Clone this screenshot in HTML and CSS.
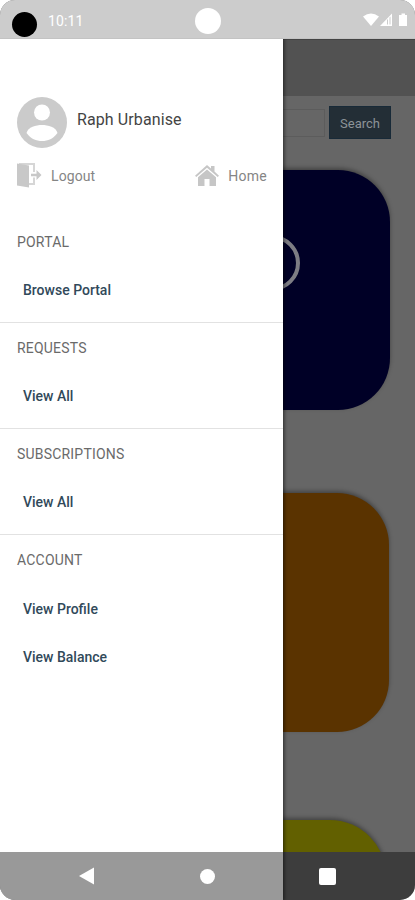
FILE: index.html
```html
<!DOCTYPE html>
<html lang="en">
<head>
<meta charset="utf-8">
<title>Portal menu</title>
<link rel="stylesheet" href="styles.css">
</head>
<body>
<div class="phone">
  <header class="status">
    <span class="dot"></span>
    <span class="clock">10:11</span>
    <span class="camera"></span>
    <svg class="signals" width="44" height="16" viewBox="0 0 44 16" fill="#fff">
      <path d="M0 4.500Q8 -1.500 16 4.500L8 14Z"/>
      <path fill-rule="evenodd" d="M17 14L29 1.500V14ZM24 8V12.500H25V7ZM26.500 5.500V12.500H27.500V4.500Z"/>
      <path d="M38.500 1.500H42V3H44V14H36V3H38.500Z"/>
    </svg>
  </header>
  <main class="app">
    <div class="toolbar"></div>
    <div class="search">
      <div class="field"></div>
      <button class="submit">Search</button>
    </div>
    <div class="cards">
      <div class="card navy"><span class="ring"></span></div>
      <div class="card orange"></div>
      <div class="card yellow"></div>
    </div>
  </main>
  <aside class="drawer">
    <div class="profile">
      <svg width="50" height="51" viewBox="0 0 50 51">
        <ellipse cx="25" cy="25.500" rx="25" ry="25.500" fill="#cbcbcb"/>
        <circle cx="25" cy="15.500" r="8" fill="#fff"/>
        <path d="M9.500 36C11 30 19 28 25 28S39 30 40.500 36C36 42 31 44 25 44S14 42 9.500 36Z" fill="#fff"/>
      </svg>
      <span class="name">Raph Urbanise</span>
    </div>
    <div class="actions">
      <a class="action">
        <svg width="25" height="25" viewBox="0 0 25 25">
          <path d="M2 1H17V9M17 14.500V21H11" fill="none" stroke="#d6d6d6" stroke-width="2"/>
          <path d="M0 .5L12 2.500V24.500L0 22.500Z" fill="#c8c8c8"/>
          <path d="M14 10.800H19.500V7L24.500 12L19.500 17V13.200H14Z" fill="#c8c8c8"/>
        </svg>
        <span>Logout</span>
      </a>
      <a class="action home">
        <svg width="24" height="21" viewBox="0 0 24 21" fill="#c6c6c6">
          <path d="M12 0L16 3.500V1H19.500V6.500L24 10.700L22.700 12L12 2.800L1.300 12L0 10.700Z"/>
          <path d="M12 4.500L21 12.200V21H14.500V14H9.500V21H3V12.200Z"/>
        </svg>
        <span>Home</span>
      </a>
    </div>
    <nav class="menu">
      <section><h2>PORTAL</h2><a>Browse Portal</a></section>
      <section><h2>REQUESTS</h2><a>View All</a></section>
      <section><h2>SUBSCRIPTIONS</h2><a>View All</a></section>
      <section><h2>ACCOUNT</h2><a>View Profile</a><a>View Balance</a></section>
    </nav>
  </aside>
  <footer class="system">
    <svg width="15" height="18" viewBox="0 0 15 18" fill="#fff"><path d="M0 9L15 .5V17.500Z"/></svg>
    <svg class="circle" width="15" height="15" viewBox="0 0 15 15" fill="#fff"><circle cx="7.500" cy="7.500" r="7.500"/></svg>
    <svg width="17" height="17" viewBox="0 0 17 17" fill="#fff"><rect width="17" height="17" rx="2"/></svg>
  </footer>
</div>
</body>
</html>
```
FILE: styles.css
```css
* { box-sizing: border-box; }
body {
  margin: 0;
  background: #fff;
  font-family: Roboto, "Liberation Sans", sans-serif;
  font-size: 14px;
}
.phone {
  display: grid;
  grid-template-columns: 283px 132px;
  grid-template-rows: 39px 813px 48px;
  width: 415px;
  height: 900px;
  border-radius: 15px;
  overflow: hidden;
  background: #666;
}
.status {
  grid-area: 1 / 1 / 2 / 3;
  z-index: 3;
  display: flex;
  align-items: center;
  padding: 4px 8px 0 12px;
  background: #ccc;
  border-bottom: 1px solid #c3c3c3;
}
.dot { width: 25px; height: 25px; margin-top: 6px; border-radius: 50%; background: #000; }
.clock { width: 60px; margin-left: 11px; color: #fff; font-size: 14px; letter-spacing: .1px; }
.camera { width: 26px; height: 26px; margin-left: 87px; border-radius: 50%; background: #fff; }
.signals { margin: -2px 0 0 auto; }
.app {
  grid-area: 2 / 1 / 3 / 3;
  overflow: hidden;
}
.toolbar { height: 57px; background: #525252; border-top: 1px solid #434343; }
.search { display: flex; align-items: center; gap: 4px; height: 53px; padding: 0 24px; }
.field { flex: 1; height: 28px; border: 1px solid #5c5c5c; }
.submit {
  width: 62px;
  height: 33px;
  padding: 2px 0 0;
  border: 1px solid #182a38;
  background: #232e36;
  color: #8c9398;
  font: 13px Roboto, sans-serif;
}
.cards { padding: 21px 25px 0; }
.card {
  display: flex;
  align-items: flex-start;
  justify-content: center;
  height: 240px;
  margin-bottom: 83px;
  border-radius: 52px;
  box-shadow: 0 -2px 4px rgba(0, 0, 0, .35);
}
.navy { background: #000026; }
.orange { background: #5a3300; margin-right: 1px; height: 239px; margin-bottom: 88px; }
.yellow { background: #626000; margin-right: 4px; border-radius: 56px; }
.ring { width: 56px; height: 56px; margin: 65px 0 0 128px; border: 4px solid #7d7d84; border-radius: 50%; }
.drawer {
  grid-area: 2 / 1 / 4 / 2;
  z-index: 1;
  padding-top: 58px;
  background: #fff;
  box-shadow: 0 0 4px 1px rgba(0, 0, 0, .6);
}
.profile { display: flex; align-items: center; gap: 10px; height: 51px; padding-left: 17px; }
.name { margin-top: -6px; color: #444; font-size: 16px; letter-spacing: .1px; }
.actions {
  display: flex;
  justify-content: space-between;
  height: 30px;
  margin: 12px 16px 26px 17px;
}
.action { display: flex; align-items: center; gap: 9px; color: #858585; font-size: 14px; letter-spacing: .1px; }
.action span { padding-top: 1px; }
.home { letter-spacing: .25px; }
.menu { padding-top: .5px; }
section { height: 106.2px; border-bottom: 1px solid #e2e2e2; }
section:last-child { height: auto; border: 0; }
h2 {
  margin: 0;
  padding: 1px 0 0 17px;
  color: #6a6a6a;
  font-size: 14px;
  font-weight: 400;
  letter-spacing: .2px;
  line-height: 48.5px;
}
section a {
  display: block;
  padding-left: 23px;
  color: #31495a;
  font-size: 14px;
  font-weight: 500;
  line-height: 48.5px;
}
.system {
  grid-area: 3 / 1 / 4 / 3;
  z-index: 2;
  display: flex;
  align-items: center;
  justify-content: space-between;
  padding: 0 79px;
  background: rgba(0, 0, 0, .4);
}
.circle { margin-left: 2px; }
```
